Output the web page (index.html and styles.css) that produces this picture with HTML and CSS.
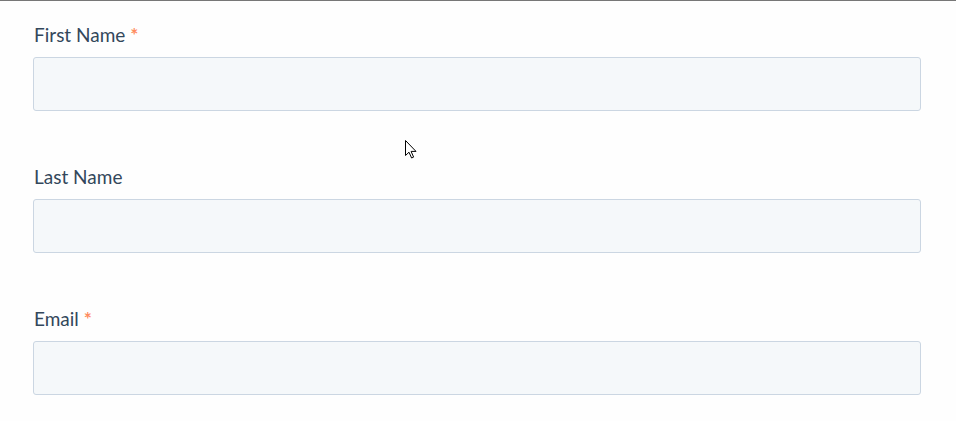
FILE: index.html
```html
<!DOCTYPE html>
<html lang="en">
<head>
  <meta charset="UTF-8">
  <title>Contact form</title>
  <link rel="stylesheet" href="styles.css">
</head>
<body>
  <form class="form">
    <div class="field">
      <label class="label">First Name <span class="req">*</span></label>
      <input class="input" type="text">
    </div>
    <div class="field">
      <label class="label">Last Name</label>
      <input class="input" type="text">
    </div>
    <div class="field">
      <label class="label">Email <span class="req">*</span></label>
      <input class="input" type="email">
    </div>
  </form>

  <svg class="pointer" width="14" height="20" viewBox="0 0 14 20">
    <path d="M0.5 0.5 L0.5 15.5 L4 12.2 L6.6 18 L8.6 17.1 L6.1 11.4 L11 11.4 Z" fill="#fff" stroke="#000" stroke-width="1"/>
  </svg>
</body>
</html>
```

FILE: styles.css
```css
html, body {
  height: 100%;
  overflow: hidden;
}

body {
  box-sizing: border-box;
  margin: 0;
  background: #fefefe;
  border-top: 1px solid #777;
  font-family: Lato, "Open Sans", sans-serif;
  position: relative;
}

.form {
  padding: 23px 35px 0 33px;
}

.field {
  display: flex;
  flex-direction: column;
  margin-bottom: 55px;
}

.field:last-child {
  margin-bottom: 0;
}

.label {
  font-size: 19px;
  line-height: 22px;
  color: #33475b;
  margin-bottom: 11px;
  padding-left: 1px;
}

.req {
  color: #ff8c5f;
  font-weight: bold;
}

.input {
  box-sizing: border-box;
  height: 54px;
  margin: 0;
  background: #f5f8fa;
  border: 1px solid #cbd6e2;
  border-radius: 3px;
}

.pointer {
  position: absolute;
  left: 405px;
  top: 139px;
}
```
